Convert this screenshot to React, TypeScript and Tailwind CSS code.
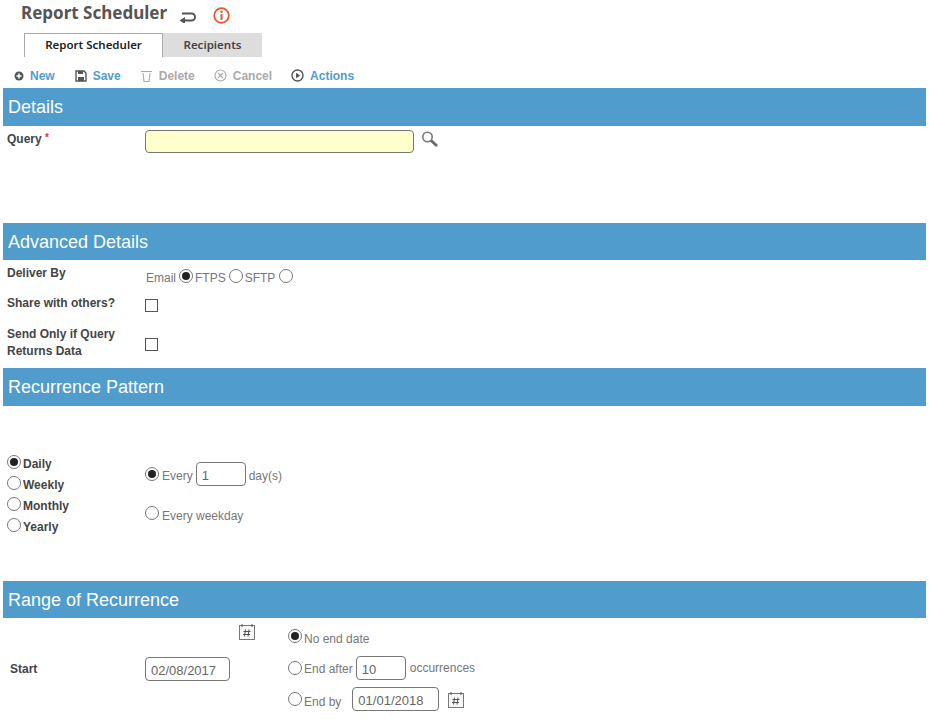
import React from "react";

const sans = "font-['Liberation_Sans',Arial,sans-serif]";

function Radio({ on = false }: { on?: boolean }) {
  return (
    <span className="inline-flex h-[14px] w-[14px] shrink-0 items-center justify-center rounded-full border border-[#777] bg-white">
      {on && <span className="h-[8px] w-[8px] rounded-full bg-[#222]" />}
    </span>
  );
}

function Bar({ children, cls }: { children: React.ReactNode; cls: string }) {
  return (
    <div className={`flex items-center bg-[#4f9ccd] pl-[5px] text-[18px] text-white ${cls}`}>{children}</div>
  );
}

function Box({ value, w }: { value: string; w: string }) {
  return (
    <span className={`flex h-[24px] items-center rounded-[4px] border border-[#777] bg-white pl-[5px] pt-[4px] text-[13px] text-[#666] ${w}`}>
      {value}
    </span>
  );
}

function Cal() {
  return (
    <svg width="16" height="16" viewBox="0 0 16 16" className="shrink-0">
      <rect x="0.5" y="1.5" width="15" height="14" fill="#f7f7f7" stroke="#777" />
      <path d="M3 0v3M13 0v3" stroke="#555" />
      <path d="M6.5 5.5 5.5 12.5M10 5.5 9 12.5M4.5 7.5h7M4 10.5h7" stroke="#555" fill="none" />
    </svg>
  );
}

function Tool({ icon, label, active, cls = "" }: { icon: React.ReactNode; label: string; active: boolean; cls?: string }) {
  return (
    <span className={`flex items-center gap-[6px] ${active ? "text-[#4f9ccd]" : "text-[#aaa]"} ${cls}`}>
      {icon}
      {label}
    </span>
  );
}

export default function App() {
  return (
    <div className={`h-[719px] w-[929px] overflow-hidden bg-white pl-[3px] pr-[3px] text-[#444] ${sans}`}>
      {/* Title */}
      <div className="flex h-[33px] items-start pl-[18px]">
        <span className="pt-[2px] font-['Noto_Sans',sans-serif] text-[17px] font-bold leading-[22px] text-[#555]">Report Scheduler</span>
        <svg width="18" height="14" viewBox="0 0 18 14" className="ml-[12px] mt-[9px]">
          <path d="M5 11.5h7.5a3.2 3.2 0 0 0 0-7H3" fill="none" stroke="#555" strokeWidth="2" />
          <path d="M0.5 11.5 6 8v7z" fill="#555" />
        </svg>
        <svg width="17" height="17" viewBox="0 0 17 17" className="ml-[16px] mt-[7px]">
          <circle cx="8.5" cy="8.5" r="7.3" fill="none" stroke="#e8562a" strokeWidth="1.7" />
          <path d="M8.5 7v6" stroke="#e8562a" strokeWidth="2" />
          <circle cx="8.5" cy="4.7" r="1.2" fill="#e8562a" />
        </svg>
      </div>
      {/* Tabs */}
      <div className="flex h-[24px] pl-[21px] font-['Noto_Sans',sans-serif] text-[11.5px] font-semibold">
        <div className="flex w-[139px] items-start justify-center border-l border-r border-t border-[#aaa] bg-white pt-[2px] text-[#222]">Report Scheduler</div>
        <div className="flex w-[99px] items-start justify-center bg-[#dddddd] pt-[3px] text-[#444]">Recipients</div>
      </div>
      {/* Toolbar */}
      <div className="flex h-[31px] items-center gap-[19px] pl-[11px] pt-[6px] text-[12px] font-bold">
        <Tool active label="New" icon={
          <svg width="10" height="10" viewBox="0 0 10 10"><circle cx="5" cy="5" r="4.5" fill="#555" /><path d="M2.5 5h5M5 2.5v5" stroke="#fff" strokeWidth="1.5" /></svg>
        } />
        <Tool active cls="ml-[1px]" label="Save" icon={
          <svg width="12" height="12" viewBox="0 0 12 12"><path d="M1 1h8l2 2v8H1z" fill="none" stroke="#555" strokeWidth="1.4" /><rect x="3" y="1" width="5" height="3" fill="#555" /><rect x="3" y="7" width="6" height="4" fill="#555" /></svg>
        } />
        <Tool active={false} label="Delete" icon={
          <svg width="13" height="12" viewBox="0 0 13 12"><path d="M1 1.5h11M3 3l1 8.5h5L10 3" fill="none" stroke="#aaa" strokeWidth="1.1" /></svg>
        } />
        <Tool active={false} label="Cancel" icon={
          <svg width="13" height="13" viewBox="0 0 13 13"><circle cx="6.5" cy="6.5" r="5.5" fill="none" stroke="#aaa" strokeWidth="1.2" /><path d="M4 4l5 5M9 4l-5 5" stroke="#aaa" strokeWidth="1.2" /></svg>
        } />
        <Tool active label="Actions" icon={
          <svg width="13" height="13" viewBox="0 0 13 13"><circle cx="6.5" cy="6.5" r="5.5" fill="none" stroke="#555" strokeWidth="1.4" /><path d="M5 3.8v5.4L9.3 6.5z" fill="#555" /></svg>
        } />
      </div>

      <Bar cls="h-[38px]">Details</Bar>
      <div className="flex h-[97px] items-start pl-[4px] pt-[4px]">
        <span className="w-[138px] text-[12px] font-bold leading-[18px]">Query <span className="relative top-[-2px] text-[10px] text-[#d33]">*</span></span>
        <span className="h-[23px] w-[269px] rounded-[4px] border border-[#777] bg-[#ffffcc]" />
        <svg width="18" height="18" viewBox="0 0 18 18" className="ml-[7px] mt-[1px]">
          <circle cx="6.5" cy="6" r="4.7" fill="#fff" stroke="#777" strokeWidth="1.6" />
          <path d="M10 9.5l6 5.5" stroke="#666" strokeWidth="2.8" />
        </svg>
      </div>

      <Bar cls="h-[37px] pt-[2px]">Advanced Details</Bar>
      <div className="flex h-[30px] items-start pl-[4px] pt-[6px]">
        <span className="w-[139px] text-[12px] font-bold leading-[14px]">Deliver By</span>
        <span className="flex items-start pt-[5px] text-[12px] leading-[14px] text-[#777]">
          <span>Email</span>
          <span className="ml-[3px] -mt-[2px]"><Radio on /></span>
          <span className="ml-[2px]">FTPS</span>
          <span className="ml-[3px] -mt-[2px]"><Radio /></span>
          <span className="ml-[2px]">SFTP</span>
          <span className="ml-[4px] -mt-[2px]"><Radio /></span>
        </span>
      </div>
      <div className="flex h-[30px] items-start pl-[4px] pt-[6px]">
        <span className="w-[138px] text-[12px] font-bold leading-[14px]">Share with others?</span>
        <span className="mt-[3px] h-[13px] w-[13px] border border-[#555] bg-white" />
      </div>
      <div className="flex h-[48px] items-start pl-[4px] pt-[6px]">
        <span className="w-[138px] text-[12px] font-bold leading-[17px]">Send Only if Query<br />Returns Data</span>
        <span className="mt-[12px] h-[13px] w-[13px] border border-[#555] bg-white" />
      </div>

      <Bar cls="h-[38px]">Recurrence Pattern</Bar>
      <div className="flex h-[175px] items-start pl-[4px] pt-[49px]">
        <div className="flex w-[138px] flex-col gap-[7px] text-[12px] font-bold">
          {["Daily", "Weekly", "Monthly", "Yearly"].map((t, i) => (
            <span key={t} className="flex h-[14px] items-start gap-[2px] leading-[14px]">
              <Radio on={i === 0} />
              <span className="pt-[2px]">{t}</span>
            </span>
          ))}
        </div>
        <div className="flex flex-col text-[12px] text-[#777]">
          <div className="mt-[7px] flex h-[24px] items-center gap-[3px]">
            <Radio on />
            <span className="pt-[4px]">Every</span>
            <Box value="1" w="w-[50px]" />
            <span className="pt-[4px]">day(s)</span>
          </div>
          <div className="mt-[20px] flex items-start gap-[3px]">
            <Radio />
            <span className="pt-[3px] leading-[14px]">Every weekday</span>
          </div>
        </div>
      </div>

      <Bar cls="h-[37px] pt-[2px]">Range of Recurrence</Bar>
      <div className="flex items-start pl-[7px]">
        <span className="mt-[44px] w-[135px] text-[12px] font-bold leading-[14px]">Start</span>
        <div className="flex w-[143px] flex-col">
          <div className="mt-[6px] flex h-[16px] justify-end pr-[33px]"><Cal /></div>
          <div className="mt-[17px]"><Box value="02/08/2017" w="w-[85px]" /></div>
        </div>
        <div className="flex flex-col text-[12px] text-[#777]">
          <div className="mt-[11px] flex h-[14px] items-start gap-[2px] leading-[14px]">
            <Radio on />
            <span className="pt-[3px]">No end date</span>
          </div>
          <div className="mt-[13px] flex h-[24px] items-center">
            <Radio />
            <span className="ml-[2px] pt-[1px]">End after</span>
            <span className="ml-[3px]"><Box value="10" w="w-[50px]" /></span>
            <span className="ml-[4px]">occurrences</span>
          </div>
          <div className="mt-[7px] flex h-[24px] items-center">
            <Radio />
            <span className="ml-[2px] pt-[5px]">End by</span>
            <span className="ml-[11px]"><Box value="01/01/2018" w="w-[87px]" /></span>
            <span className="ml-[9px] mt-[1px]"><Cal /></span>
          </div>
        </div>
      </div>
    </div>
  );
}
